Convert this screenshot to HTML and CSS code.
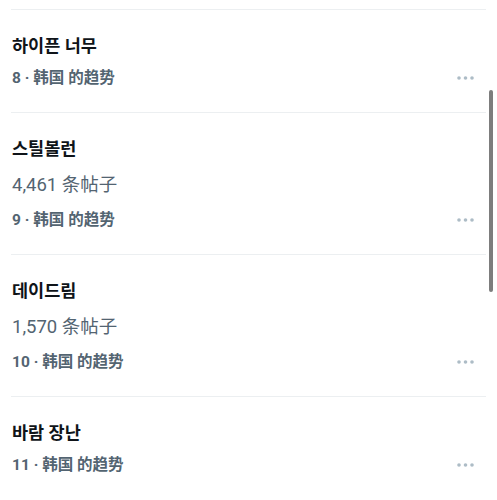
FILE: index.html
```html
<!DOCTYPE html>
<html lang="zh">
<head>
    <meta charset="UTF-8">
    <meta name="viewport" content="width=device-width, initial-scale=1.0">
    <title>趋势</title>
    <link rel="stylesheet" href="styles.css">
</head>
<body>

<div class="page">
    <div class="trends">
        <div class="trend">
            <div class="trend-text">
                <div class="trend-title" lang="ko">하이픈 너무</div>
                <div class="trend-meta">8 · 韩国 的趋势</div>
            </div>
            <svg class="more" width="17" height="4" viewBox="0 0 17 4"><circle cx="2" cy="2" r="1.8"/><circle cx="8.5" cy="2" r="1.8"/><circle cx="15" cy="2" r="1.8"/></svg>
        </div>
        <div class="trend">
            <div class="trend-text">
                <div class="trend-title" lang="ko">스틸볼런</div>
                <div class="trend-count">4,461 条帖子</div>
                <div class="trend-meta">9 · 韩国 的趋势</div>
            </div>
            <svg class="more" width="17" height="4" viewBox="0 0 17 4"><circle cx="2" cy="2" r="1.8"/><circle cx="8.5" cy="2" r="1.8"/><circle cx="15" cy="2" r="1.8"/></svg>
        </div>
        <div class="trend">
            <div class="trend-text">
                <div class="trend-title" lang="ko">데이드림</div>
                <div class="trend-count">1,570 条帖子</div>
                <div class="trend-meta">10 · 韩国 的趋势</div>
            </div>
            <svg class="more" width="17" height="4" viewBox="0 0 17 4"><circle cx="2" cy="2" r="1.8"/><circle cx="8.5" cy="2" r="1.8"/><circle cx="15" cy="2" r="1.8"/></svg>
        </div>
        <div class="trend">
            <div class="trend-text">
                <div class="trend-title" lang="ko">바람 장난</div>
                <div class="trend-meta">11 · 韩国 的趋势</div>
            </div>
            <svg class="more" width="17" height="4" viewBox="0 0 17 4"><circle cx="2" cy="2" r="1.8"/><circle cx="8.5" cy="2" r="1.8"/><circle cx="15" cy="2" r="1.8"/></svg>
        </div>
    </div>
    <div class="scroll-track">
        <div class="scroll-thumb"></div>
    </div>
</div>

</body>
</html>
```

FILE: styles.css
```css
/* Список трендов */
body {
    margin: 0;
    background: #fff;
    font-family: Roboto, 'Noto Sans CJK SC', sans-serif;
    color: #0f1419;
    overflow: hidden;
}
.page {
    display: flex;
    padding-top: 9px;
    padding-left: 11px;
}
.trends {
    width: 475px;
}
.trend {
    display: flex;
    align-items: flex-end;
    justify-content: space-between;
    border-top: 1px solid #eceff1;
    padding: 19px 12px 19px 1px;
}
.trend-title {
    font-family: Roboto, 'Noto Sans CJK KR', sans-serif;
    font-size: 17.5px;
    font-weight: 700;
    line-height: 34px;
}
.trend-count {
    font-size: 18.5px;
    line-height: 39px;
    color: #536471;
}
.trend-meta {
    font-size: 15.5px;
    font-weight: 700;
    line-height: 30px;
    color: #536471;
}
.more {
    fill: #adbcc6;
    margin-bottom: 13px;
}
.scroll-track {
    width: 4px;
    margin-left: 3px;
}
.scroll-thumb {
    margin-top: 81px;
    height: 202px;
    border-radius: 2px;
    background: #7d7d7d;
}
```
